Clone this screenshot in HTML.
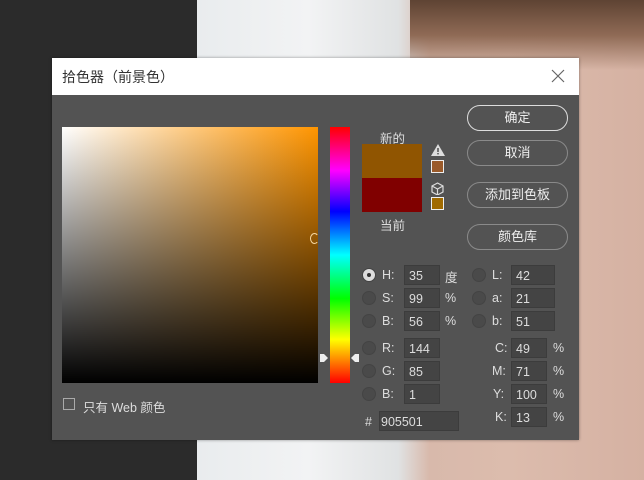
<!DOCTYPE html>
<html><head><meta charset="utf-8"><style>
*{margin:0;padding:0;box-sizing:border-box}
body{width:644px;height:480px;position:relative;overflow:hidden;background:#2b2b2b;font-family:"Liberation Sans","Noto Sans CJK SC",sans-serif;color:#ddd;font-size:12px}
.a{position:absolute}
.photo{left:197px;top:0;width:447px;height:480px;background:linear-gradient(90deg,#e9ecee 0%,#f2f3f4 25%,#e0e2e3 45%,#d8b9ab 52%,#dcbcad 70%,#d5b1a2 100%)}
.hair{left:410px;top:0;width:234px;height:70px;background:linear-gradient(180deg,#5e4333,#8f6a55 50%,rgba(215,180,165,0))}
.dlg{left:52px;top:58px;width:527px;height:382px;background:#535353;box-shadow:0 0 3px rgba(0,0,0,.4)}
.title{left:0;top:0;width:527px;height:37px;background:#fff;color:#333;font-size:14px;padding:9px 0 0 10px}
.field{background:#444;border:1px solid #3c3c3c;color:#ddd;font-size:12.5px;padding:3px 0 0 4px;height:20px}
.btn{left:415px;width:101px;height:26px;border:1px solid #8a8a8a;border-radius:13px;text-align:center;line-height:24px;font-size:13px;color:#eee}
.rad{width:14px;height:14px;border-radius:50%;background:#4a4a4a;border:1px solid #444}
.lb{font-size:12.5px;color:#ddd;margin-top:1px}
</style></head><body>
<div class="a photo"></div><div class="a hair"></div>
<div class="a dlg">
<div class="a title">拾色器（前景色）</div>
<svg class="a" style="left:499px;top:11px" width="14" height="14"><path d="M1 1L13 13M13 1L1 13" stroke="#666" stroke-width="1.2"/></svg>
<div class="a" style="left:10px;top:69px;width:256px;height:256px;background:linear-gradient(0deg,#000,rgba(0,0,0,0)),linear-gradient(90deg,#fff,#ff9500)"></div>
<div class="a" style="left:258px;top:175px;width:9px;height:11px;border:1px solid #f4d6a0;border-radius:50%;border-right-color:transparent"></div>
<div class="a" style="left:278px;top:69px;width:20px;height:256px;background:linear-gradient(180deg,#f00,#f0f 17%,#00f 33%,#0ff 50%,#0f0 67%,#ff0 83%,#f00)"></div>
<svg class="a" style="left:268px;top:294px" width="40" height="12"><path d="M0 2h4l4 4-4 4H0z" fill="#eee"/><path d="M39 2h-4l-4 4 4 4h4z" fill="#eee"/></svg>
<div class="a lb" style="left:328px;top:69px">新的</div>
<div class="a" style="left:310px;top:86px;width:60px;height:34px;background:#905501"></div>
<div class="a" style="left:310px;top:120px;width:60px;height:34px;background:#800000"></div>
<div class="a lb" style="left:328px;top:156px">当前</div>
<svg class="a" style="left:379px;top:86px" width="14" height="12"><path d="M7 0L14 12H0z" fill="#ddd"/><rect x="6.3" y="4" width="1.4" height="4" fill="#444"/><rect x="6.3" y="9" width="1.4" height="1.4" fill="#444"/></svg>
<div class="a" style="left:379px;top:102px;width:13px;height:13px;border:1px solid #eee;background:#9a5a2a"></div>
<svg class="a" style="left:379px;top:124px" width="13" height="13"><path d="M6.5 1L12 4v6l-5.5 3L1 10V4zM1 4l5.5 3L12 4M6.5 7v6" fill="none" stroke="#ddd" stroke-width="1.2"/></svg>
<div class="a" style="left:379px;top:139px;width:13px;height:13px;border:1px solid #eee;background:#a06a00"></div>
<div class="a btn" style="top:47px;border-color:#ddd">确定</div>
<div class="a btn" style="top:82px">取消</div>
<div class="a btn" style="top:124px">添加到色板</div>
<div class="a btn" style="top:166px">颜色库</div>

<div class="a rad" style="left:310px;top:210px;background:#ddd"><div class="a" style="left:4px;top:4px;width:4px;height:4px;border-radius:50%;background:#333"></div></div>
<div class="a lb" style="left:330px;top:209px">H:</div><div class="a field" style="left:352px;top:207px;width:36px">35</div><div class="a lb" style="left:393px;top:208px">度</div>
<div class="a rad" style="left:420px;top:210px"></div><div class="a lb" style="left:440px;top:209px">L:</div><div class="a field" style="left:459px;top:207px;width:44px">42</div>
<div class="a rad" style="left:310px;top:233px"></div><div class="a lb" style="left:330px;top:232px">S:</div><div class="a field" style="left:352px;top:230px;width:36px">99</div><div class="a lb" style="left:393px;top:232px">%</div>
<div class="a rad" style="left:420px;top:233px"></div><div class="a lb" style="left:440px;top:232px">a:</div><div class="a field" style="left:459px;top:230px;width:44px">21</div>
<div class="a rad" style="left:310px;top:256px"></div><div class="a lb" style="left:330px;top:255px">B:</div><div class="a field" style="left:352px;top:253px;width:36px">56</div><div class="a lb" style="left:393px;top:255px">%</div>
<div class="a rad" style="left:420px;top:256px"></div><div class="a lb" style="left:440px;top:255px">b:</div><div class="a field" style="left:459px;top:253px;width:44px">51</div>

<div class="a rad" style="left:310px;top:283px"></div><div class="a lb" style="left:330px;top:282px">R:</div><div class="a field" style="left:352px;top:280px;width:36px">144</div>
<div class="a rad" style="left:310px;top:306px"></div><div class="a lb" style="left:330px;top:305px">G:</div><div class="a field" style="left:352px;top:303px;width:36px">85</div>
<div class="a rad" style="left:310px;top:329px"></div><div class="a lb" style="left:330px;top:328px">B:</div><div class="a field" style="left:352px;top:326px;width:36px">1</div>
<div class="a lb" style="left:313px;top:356px">#</div><div class="a field" style="left:327px;top:353px;width:80px;padding-left:1px">905501</div>

<div class="a lb" style="left:443px;top:282px">C:</div><div class="a field" style="left:459px;top:280px;width:36px">49</div><div class="a lb" style="left:501px;top:282px">%</div>
<div class="a lb" style="left:440px;top:305px">M:</div><div class="a field" style="left:459px;top:303px;width:36px">71</div><div class="a lb" style="left:501px;top:305px">%</div>
<div class="a lb" style="left:441px;top:328px">Y:</div><div class="a field" style="left:459px;top:326px;width:36px">100</div><div class="a lb" style="left:501px;top:328px">%</div>
<div class="a lb" style="left:443px;top:351px">K:</div><div class="a field" style="left:459px;top:349px;width:36px">13</div><div class="a lb" style="left:501px;top:351px">%</div>

<div class="a" style="left:11px;top:340px;width:12px;height:12px;border:1px solid #aaa"></div>
<div class="a lb" style="left:31px;top:338px">只有 Web 颜色</div>
</div>
</body></html>
